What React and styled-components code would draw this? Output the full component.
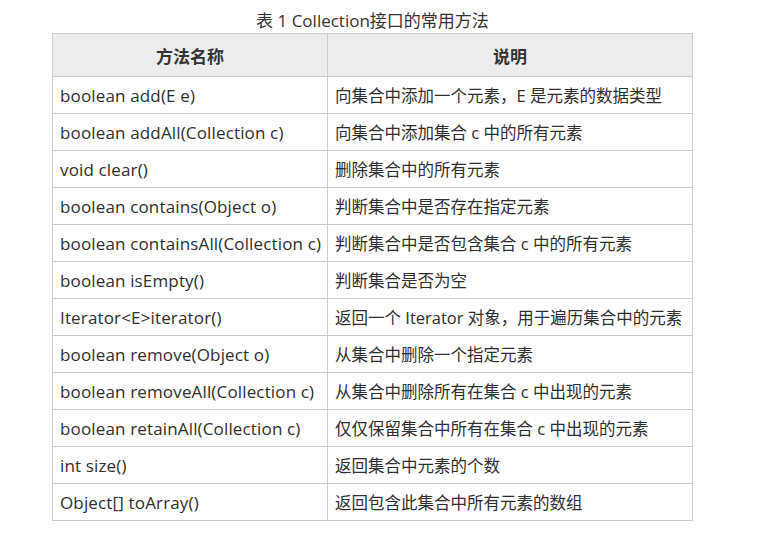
import React from "react";
import styled, { createGlobalStyle } from "styled-components";

const GlobalStyle = createGlobalStyle`
  html, body {
    margin: 0;
    padding: 0;
    background: #fff;
  }
  body {
    font-family: "Open Sans", "Noto Sans CJK SC", sans-serif;
    color: #333;
  }
`;

const Page = styled.div`
  width: 763px;
  height: 538px;
  padding: 0 0 0 52px;
  box-sizing: border-box;
`;

const Caption = styled.div`
  width: 641px;
  height: 33px;
  display: flex;
  align-items: center;
  justify-content: center;
  padding-top: 6px;
  box-sizing: border-box;
  font-size: 17px;
  color: #333;
`;

const Table = styled.table`
  width: 641px;
  border-collapse: collapse;
  table-layout: fixed;
  font-size: 17px;
`;

const HeadCell = styled.th`
  height: 42px;
  background: #ececec;
  border: 1px solid #ccc;
  font-weight: bold;
  text-align: center;
  color: #333;
  padding: 0;
`;

const Cell = styled.td`
  height: 36px;
  border: 1px solid #ccc;
  padding: 0 7px;
  color: #2f2f2f;
  white-space: nowrap;
  overflow: hidden;
  font-size: ${(p) => (p.$desc ? "16.5px" : "17px")};
  letter-spacing: ${(p) => (p.$desc ? "0" : "0.15px")};
`;

const rows = [
  ["boolean add(E e)", "向集合中添加一个元素，E 是元素的数据类型"],
  ["boolean addAll(Collection c)", "向集合中添加集合 c 中的所有元素"],
  ["void clear()", "删除集合中的所有元素"],
  ["boolean contains(Object o)", "判断集合中是否存在指定元素"],
  ["boolean containsAll(Collection c)", "判断集合中是否包含集合 c 中的所有元素"],
  ["boolean isEmpty()", "判断集合是否为空"],
  ["Iterator<E>iterator()", "返回一个 Iterator 对象，用于遍历集合中的元素"],
  ["boolean remove(Object o)", "从集合中删除一个指定元素"],
  ["boolean removeAll(Collection c)", "从集合中删除所有在集合 c 中出现的元素"],
  ["boolean retainAll(Collection c)", "仅仅保留集合中所有在集合 c 中出现的元素"],
  ["int size()", "返回集合中元素的个数"],
  ["Object[] toArray()", "返回包含此集合中所有元素的数组"],
];

export default function App() {
  return (
    <Page>
      <GlobalStyle />
      <Caption>表 1 Collection接口的常用方法</Caption>
      <Table>
        <colgroup>
          <col style={{ width: 275 }} />
          <col />
        </colgroup>
        <thead>
          <tr>
            <HeadCell>方法名称</HeadCell>
            <HeadCell>说明</HeadCell>
          </tr>
        </thead>
        <tbody>
          {rows.map(([method, desc]) => (
            <tr key={method}>
              <Cell>{method}</Cell>
              <Cell $desc>{desc}</Cell>
            </tr>
          ))}
        </tbody>
      </Table>
    </Page>
  );
}
